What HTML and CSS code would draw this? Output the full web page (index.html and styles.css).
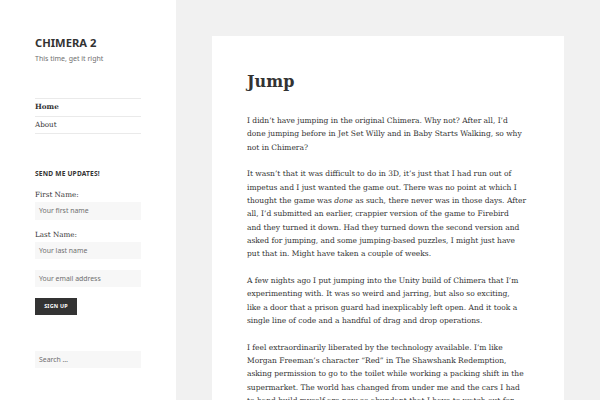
FILE: index.html
```html
<!DOCTYPE html>
<html lang="en">
<head>
<meta charset="utf-8">
<title>Chimera 2</title>
<link rel="stylesheet" href="styles.css">
</head>
<body>
<div class="page">
  <aside class="sidebar">
    <header class="site-header">
      <h1 class="site-title">CHIMERA 2</h1>
      <p class="site-description">This time, get it right</p>
    </header>
    <nav class="main-nav">
      <ul>
        <li class="current">Home</li>
        <li>About</li>
      </ul>
    </nav>
    <section class="widget signup">
      <h2 class="widget-title">SEND ME UPDATES!</h2>
      <label class="field-label">First Name:</label>
      <div class="field">Your first name</div>
      <label class="field-label">Last Name:</label>
      <div class="field">Your last name</div>
      <div class="field email">Your email address</div>
      <div class="button">SIGN UP</div>
    </section>
    <section class="widget search">
      <div class="field">Search …</div>
    </section>
  </aside>
  <main class="content">
    <article class="card">
      <h1 class="entry-title">Jump</h1>
      <div class="entry-content">
        <p>I didn’t have jumping in the original Chimera. Why not? After all, I’d<br>done jumping before in Jet Set Willy and in Baby Starts Walking, so why<br>not in Chimera?</p>
        <p>It wasn’t that it was difficult to do in 3D, it’s just that I had run out of<br>impetus and I just wanted the game out. There was no point at which I<br>thought the game was <em>done</em> as such, there never was in those days. After<br>all, I’d submitted an earlier, crappier version of the game to Firebird<br>and they turned it down. Had they turned down the second version and<br>asked for jumping, and some jumping-based puzzles, I might just have<br>put that in. Might have taken a couple of weeks.</p>
        <p>A few nights ago I put jumping into the Unity build of Chimera that I’m<br>experimenting with. It was so weird and jarring, but also so exciting,<br>like a door that a prison guard had inexplicably left open. And it took a<br>single line of code and a handful of drag and drop operations.</p>
        <p>I feel extraordinarily liberated by the technology available. I’m like<br>Morgan Freeman’s character “Red” in The Shawshank Redemption,<br>asking permission to go to the toilet while working a packing shift in the<br>supermarket. The world has changed from under me and the cars I had<br>to hand build myself are now so abundant that I have to watch out for</p>
      </div>
    </article>
  </main>
</div>
</body>
</html>
```
FILE: styles.css
```css
html, body {
  margin: 0;
  padding: 0;
}
body {
  background: #f1f1f1;
  color: #333;
  font-family: "DejaVu Serif", "Liberation Serif", serif;
  overflow: hidden;
}
.page {
  display: flex;
  align-items: flex-start;
  min-height: 400px;
}
.sidebar {
  width: 176px;
  flex: none;
  box-sizing: border-box;
  padding: 36px 35px 0 35px;
  background: #fff;
  min-height: 400px;
  display: flex;
  flex-direction: column;
}
.site-title {
  margin: 0;
  font-family: "Noto Sans", sans-serif;
  font-weight: 700;
  font-size: 11.2px;
  line-height: 14px;
  color: #333;
}
.site-description {
  margin: 4px 0 0 0;
  font-family: "Noto Sans", sans-serif;
  font-size: 7px;
  line-height: 10px;
  color: #707070;
}
.main-nav {
  margin-top: 34px;
}
.main-nav ul {
  list-style: none;
  margin: 0;
  padding: 0;
  border-top: 1px solid #eaeaea;
}
.main-nav li {
  font-size: 7.2px;
  line-height: 16.7px;
  border-bottom: 1px solid #eaeaea;
  color: #333;
}
.main-nav li.current {
  font-weight: 700;
}
.widget {
  display: flex;
  flex-direction: column;
  align-items: flex-start;
}
.signup {
  margin-top: 34.5px;
}
.widget-title {
  margin: 0 0 11px 0;
  font-family: "Noto Sans", sans-serif;
  font-weight: 700;
  font-size: 6.6px;
  line-height: 10px;
  letter-spacing: 0.03em;
  color: #333;
}
.field-label {
  font-size: 7.2px;
  line-height: 10px;
  color: #333;
  margin-bottom: 2px;
}
.field {
  width: 106px;
  height: 17.6px;
  box-sizing: border-box;
  padding: 0 4px;
  background: #f7f7f7;
  font-family: "Noto Sans", sans-serif;
  font-size: 6.9px;
  line-height: 17.6px;
  color: #707070;
  margin-bottom: 10.4px;
}
.field.email {
  margin-top: -0.2px;
  margin-bottom: 10.7px;
}
.button {
  width: 42px;
  height: 17px;
  background: #333;
  color: #fff;
  font-family: "Noto Sans", sans-serif;
  font-weight: 700;
  font-size: 5.4px;
  letter-spacing: 0.04em;
  line-height: 17px;
  text-align: center;
}
.search {
  margin-top: 35.7px;
}
.content {
  flex: none;
  padding: 36px 0 0 36px;
}
.card {
  width: 352px;
  background: #fff;
  box-sizing: border-box;
  padding: 34px 0 40px 35px;
  min-height: 400px;
}
.entry-title {
  margin: 0;
  font-size: 16px;
  line-height: 24px;
  font-weight: 700;
  color: #333;
}
.entry-content {
  margin-top: 20px;
}
.entry-content p {
  margin: 0 0 13.33px 0;
  font-size: 7.5px;
  line-height: 13.33px;
  white-space: nowrap;
  color: #333;
}
```
